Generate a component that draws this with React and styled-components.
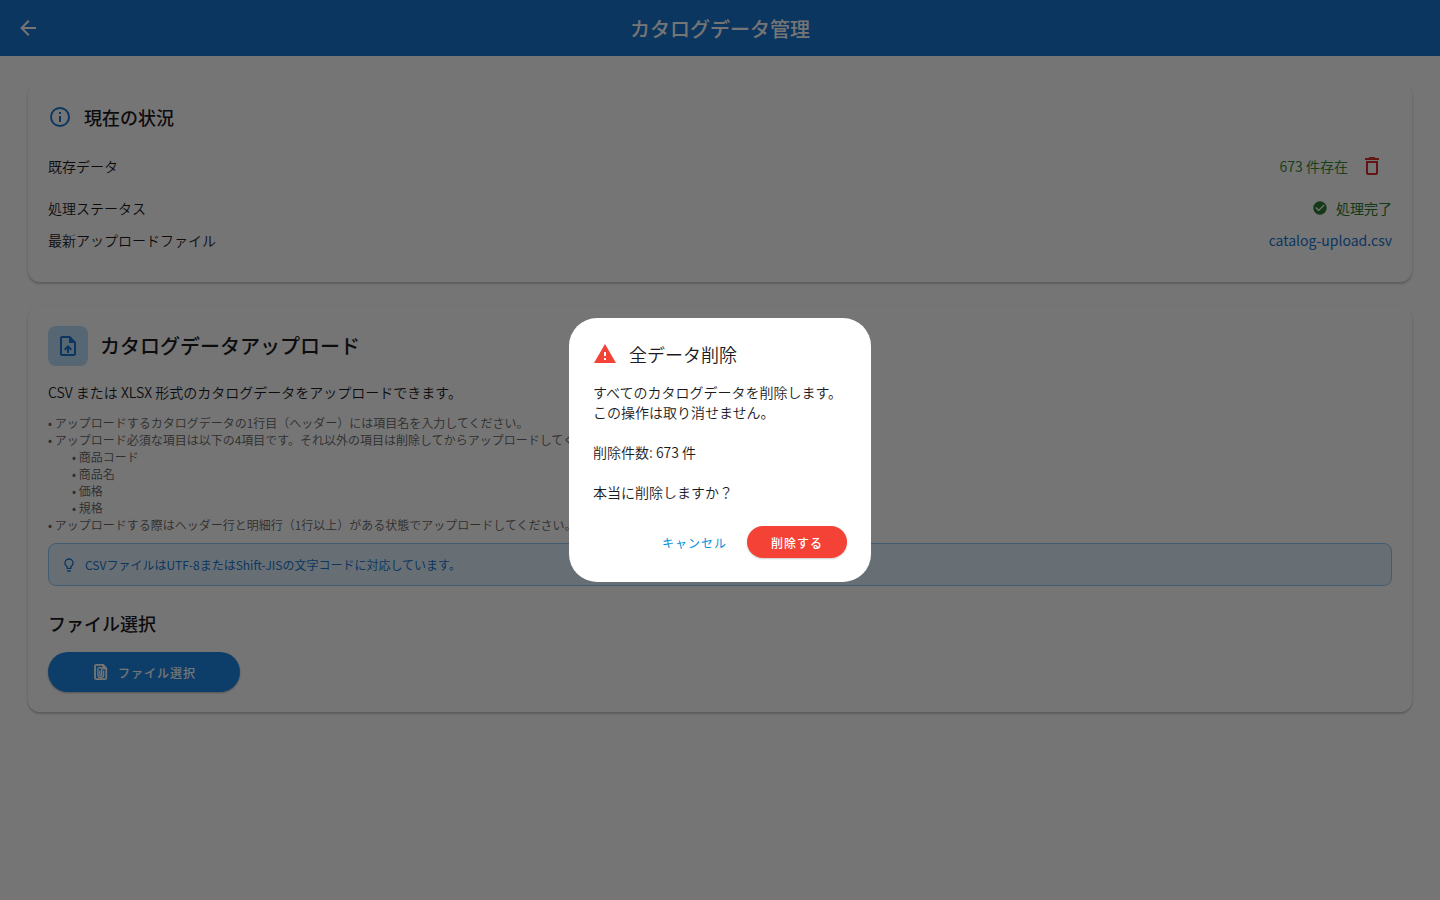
import React from 'react';
import styled, { createGlobalStyle } from 'styled-components';
import { MdUploadFile, MdWarning } from 'react-icons/md';

const GlobalStyle = createGlobalStyle`
  * {
    box-sizing: border-box;
  }
  body {
    margin: 0;
    background: #fefefe;
    color: #1c1b1f;
    font-family: 'Noto Sans CJK JP', sans-serif;
    font-size: 14px;
    font-weight: 350;
    line-height: 20px;
  }
  button {
    font-family: inherit;
    border: none;
    cursor: pointer;
  }
  h1, h2, p, ul, dl, dd {
    margin: 0;
    padding: 0;
  }
`;

const Header = styled.header`
  display: grid;
  grid-template-columns: 56px 1fr 56px;
  align-items: center;
  height: 56px;
  background: #1976d2;
  color: #fff;
`;

const HeaderTitle = styled.h1`
  padding-top: 2px;
  font-size: 20px;
  line-height: 28px;
  font-weight: 500;
  text-align: center;
`;

const IconButton = styled.button`
  display: flex;
  align-items: center;
  justify-content: center;
  width: ${(props) => props.$size}px;
  height: ${(props) => props.$size}px;
  padding: 0;
  background: transparent;
  color: ${(props) => props.$color};
`;

const Main = styled.main`
  display: flex;
  flex-direction: column;
  gap: 24px;
  padding: 28px;
`;

const Card = styled.section`
  padding: 20px;
  border-radius: 12px;
  background: #fff;
  box-shadow: 0 2px 2px rgba(0, 0, 0, 0.16), 0 1px 3px rgba(0, 0, 0, 0.1);
`;

const CardHeader = styled.div`
  display: flex;
  align-items: center;
  gap: 12px;
  margin-bottom: 16px;
  color: #1976d2;
`;

const Heading = styled.h2`
  color: #1c1b1f;
  font-size: ${(props) => (props.$large ? 20 : 18)}px;
  line-height: 26px;
  font-weight: 500;
`;

const IconBox = styled.span`
  display: flex;
  align-items: center;
  justify-content: center;
  width: 40px;
  height: 40px;
  border-radius: 8px;
  background: #bbdefb;
`;

const StatusList = styled.dl`
  display: flex;
  flex-direction: column;
  gap: 12px;
  padding-bottom: 12px;
`;

const StatusRow = styled.div`
  display: flex;
  align-items: center;
  justify-content: space-between;
`;

const StatusValue = styled.dd`
  display: flex;
  align-items: center;
  gap: ${(props) => props.$gap || 0}px;
  color: ${(props) => props.$color};
  font-weight: 400;
`;

const FileLink = styled.a`
  color: #1976d2;
  text-decoration: none;
`;

const Notes = styled.ul`
  margin: ${(props) => (props.$nested ? '0 0 0 24px' : '12px 0 10px')};
  list-style: none;
  color: #666;
  font-size: 12px;
  line-height: 17px;
`;

const Note = styled.li`
  &::before {
    content: '• ';
  }
`;

const Tip = styled.div`
  display: flex;
  align-items: center;
  gap: 8px;
  margin-bottom: 24px;
  padding: 12px;
  border: 1px solid #90caf9;
  border-radius: 8px;
  background: #e3f2fd;
  color: #1976d2;
  font-size: 12px;
  font-weight: 400;
  line-height: 17px;
`;

const UploadButton = styled.button`
  display: flex;
  align-items: center;
  justify-content: center;
  gap: 8px;
  width: 192px;
  height: 40px;
  margin-top: 16px;
  border-radius: 20px;
  background: #1e88e5;
  color: #fff;
  font-size: 12px;
  font-weight: 500;
  letter-spacing: 1px;
  box-shadow: 0 1px 2px rgba(0, 0, 0, 0.3);
`;

const Backdrop = styled.div`
  position: fixed;
  inset: 0;
  display: flex;
  align-items: center;
  justify-content: center;
  background: rgba(0, 0, 0, 0.54);
`;

const Dialog = styled.div`
  min-width: 302px;
  padding: 24px;
  border-radius: 28px;
  background: #fff;
`;

const DialogHeader = styled.div`
  display: flex;
  align-items: center;
  gap: 12px;
  margin-bottom: 16px;
  color: #f44336;
`;

const DialogTitle = styled.h2`
  color: #1c1b1f;
  font-size: 18px;
  line-height: 24px;
  font-weight: 350;
`;

const DialogText = styled.p`
  white-space: pre-line;
`;

const DialogActions = styled.div`
  display: flex;
  justify-content: flex-end;
  gap: 8px;
  margin-top: 24px;
`;

const DialogButton = styled.button`
  height: 32px;
  padding: 0 ${(props) => (props.$danger ? 24 : 12)}px;
  border-radius: 16px;
  background: ${(props) => (props.$danger ? '#f44336' : 'transparent')};
  color: ${(props) => (props.$danger ? '#fff' : '#0391dd')};
  font-size: 12px;
  font-weight: ${(props) => (props.$danger ? 500 : 400)};
  letter-spacing: 1px;
  box-shadow: ${(props) => (props.$danger ? '0 1px 2px rgba(0, 0, 0, 0.2)' : 'none')};
`;

const icons = {
  back: 'M20,11V13H8L13.5,18.5L12.08,19.92L4.16,12L12.08,4.08L13.5,5.5L8,11H20Z',
  info: 'M11,9H13V7H11M12,20C7.59,20 4,16.41 4,12C4,7.59 7.59,4 12,4C16.41,4 20,7.59 20,12C20,16.41 16.41,20 12,20M12,2A10,10 0 0,0 2,12A10,10 0 0,0 12,22A10,10 0 0,0 22,12A10,10 0 0,0 12,2M11,17H13V11H11V17Z',
  trash: 'M6,19A2,2 0 0,0 8,21H16A2,2 0 0,0 18,19V7H6V19M8,9H16V19H8V9M15.5,4L14.5,3H9.5L8.5,4H5V6H19V4H15.5Z',
  check: 'M12 2C6.5 2 2 6.5 2 12S6.5 22 12 22 22 17.5 22 12 17.5 2 12 2M10 17L5 12L6.41 10.59L10 14.17L17.59 6.58L19 8L10 17Z',
  bulb: 'M12,2A7,7 0 0,1 19,9C19,11.38 17.81,13.47 16,14.74V17A1,1 0 0,1 15,18H9A1,1 0 0,1 8,17V14.74C6.19,13.47 5,11.38 5,9A7,7 0 0,1 12,2M9,21V20H15V21A1,1 0 0,1 14,22H10A1,1 0 0,1 9,21M12,4A5,5 0 0,0 7,9C7,11.05 8.23,12.81 10,13.58V16H14V13.58C15.77,12.81 17,11.05 17,9A5,5 0 0,0 12,4Z',
};

function Icon({ name, size = 24 }) {
  return (
    <svg width={size} height={size} viewBox="0 0 24 24" fill="currentColor" aria-hidden="true">
      <path d={icons[name]} />
    </svg>
  );
}

function AttachedFileIcon() {
  return (
    <svg width="18" height="18" viewBox="0 0 24 24" fill="none" stroke="currentColor" aria-hidden="true">
      <path strokeWidth="2.4" d="M15 2.5H5.5a1.5 1.5 0 0 0-1.5 1.5v16a1.5 1.5 0 0 0 1.5 1.5h12a1.5 1.5 0 0 0 1.5-1.5V7z" />
      <path d="M14 3v5h5z" fill="currentColor" />
      <path strokeWidth="1.8" d="M15.5 10v5.5a3.8 3.8 0 0 1-7.6 0V8.5a2.5 2.5 0 0 1 5 0v7a1.2 1.2 0 0 1-2.4 0V10" />
    </svg>
  );
}

const requiredFields = ['商品コード', '商品名', '価格', '規格'];

const dialogText = `すべてのカタログデータを削除します。
この操作は取り消せません。

削除件数: 673 件

本当に削除しますか？`;

function App() {
  return (
    <>
      <GlobalStyle />
      <Header>
        <IconButton $size={56} $color="#fff" aria-label="戻る">
          <Icon name="back" />
        </IconButton>
        <HeaderTitle>カタログデータ管理</HeaderTitle>
      </Header>

      <Main>
        <Card>
          <CardHeader>
            <Icon name="info" />
            <Heading>現在の状況</Heading>
          </CardHeader>
          <StatusList>
            <StatusRow>
              <dt>既存データ</dt>
              <StatusValue $color="#388e3c" $gap={4}>
                673 件存在
                <IconButton $size={40} $color="#d32f2f" aria-label="全データ削除">
                  <Icon name="trash" />
                </IconButton>
              </StatusValue>
            </StatusRow>
            <StatusRow>
              <dt>処理ステータス</dt>
              <StatusValue $color="#2e7d32" $gap={8}>
                <Icon name="check" size={16} />
                処理完了
              </StatusValue>
            </StatusRow>
            <StatusRow>
              <dt>最新アップロードファイル</dt>
              <StatusValue>
                <FileLink href="#">catalog-upload.csv</FileLink>
              </StatusValue>
            </StatusRow>
          </StatusList>
        </Card>

        <Card>
          <CardHeader>
            <IconBox>
              <MdUploadFile size={24} />
            </IconBox>
            <Heading $large>カタログデータアップロード</Heading>
          </CardHeader>
          <p>CSV または XLSX 形式のカタログデータをアップロードできます。</p>
          <Notes>
            <Note>アップロードするカタログデータの1行目（ヘッダー）には項目名を入力してください。</Note>
            <Note>
              アップロード必須な項目は以下の4項目です。それ以外の項目は削除してからアップロードしてください。
              <Notes $nested>
                {requiredFields.map((field) => (
                  <Note key={field}>{field}</Note>
                ))}
              </Notes>
            </Note>
            <Note>アップロードする際はヘッダー行と明細行（1行以上）がある状態でアップロードしてください。</Note>
          </Notes>
          <Tip>
            <Icon name="bulb" size={16} />
            CSVファイルはUTF-8またはShift-JISの文字コードに対応しています。
          </Tip>
          <Heading>ファイル選択</Heading>
          <UploadButton>
            <AttachedFileIcon />
            ファイル選択
          </UploadButton>
        </Card>
      </Main>

      <Backdrop>
        <Dialog role="dialog" aria-modal="true" aria-labelledby="delete-title">
          <DialogHeader>
            <MdWarning size={24} />
            <DialogTitle id="delete-title">全データ削除</DialogTitle>
          </DialogHeader>
          <DialogText>{dialogText}</DialogText>
          <DialogActions>
            <DialogButton>キャンセル</DialogButton>
            <DialogButton $danger>削除する</DialogButton>
          </DialogActions>
        </Dialog>
      </Backdrop>
    </>
  );
}

export default App;
